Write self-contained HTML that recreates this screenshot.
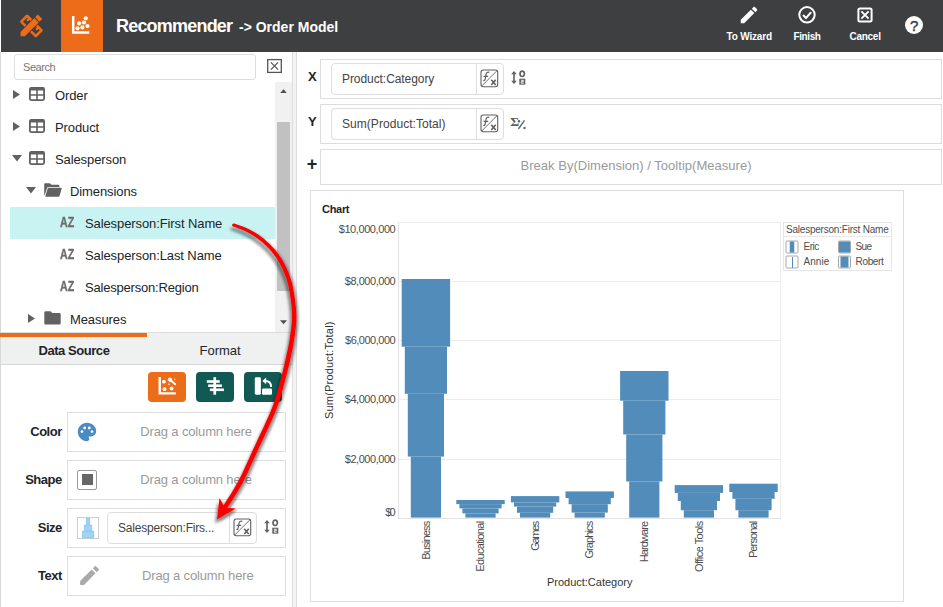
<!DOCTYPE html>
<html><head><meta charset="utf-8"><title>Recommender</title>
<style>
html,body{margin:0;padding:0;}
body{width:943px;height:607px;overflow:hidden;background:#fff;font-family:"Liberation Sans",sans-serif;color:#212529;position:relative;}
#app{position:absolute;left:0;top:0;width:943px;height:607px;overflow:hidden;background:#fff;}
.a{position:absolute;}
.t{position:absolute;white-space:nowrap;line-height:1;font-size:13px;}
.b{font-weight:bold;}
#hdr{left:1px;top:0;width:942px;height:52px;background:#3e3f41;}
#hl{left:61px;top:0;width:42px;height:52px;background:#ec6c1a;}
.hb{color:#fff;font-weight:bold;font-size:10px;}
.row{left:320px;width:622px;border:1px solid #ddd;box-sizing:border-box;background:#fff;}
.fld{border:1px solid #ddd;border-radius:4px;box-sizing:border-box;background:#fff;}
.box{border:1px solid #ddd;box-sizing:border-box;background:#fff;}
.ph{color:#9a9a9a;font-size:13px;letter-spacing:-0.15px;}
.lbl{font-weight:bold;font-size:13px;text-align:right;width:60px;letter-spacing:-0.45px;}
.tb{top:372px;width:38px;height:30px;border-radius:4px;background:#115a54;}
</style></head><body><div id="app">

<!-- header -->
<div class="a" id="hdr"></div>
<div class="a" id="hl"></div>
<span class="t b" style="left:116px;top:16.800px;font-size:18px;color:#fff;letter-spacing:-0.8px;">Recommender</span>
<span class="t b" style="left:239px;top:19.600px;font-size:14px;color:#fff;letter-spacing:0px;">-&gt; Order Model</span>
<span class="t hb" style="left:726.500px;top:31.500px;letter-spacing:-0.17px;">To Wizard</span>
<span class="t hb" style="left:793.500px;top:31.500px;letter-spacing:-0.4px;">Finish</span>
<span class="t hb" style="left:849.500px;top:31.500px;letter-spacing:-0.27px;">Cancel</span>


<!-- header icons -->
<svg class="a" style="left:10px;top:5px;" width="46" height="42" viewBox="10 5 46 42"><g transform="translate(31.200,25.600) rotate(45)"><rect x="-9.850" y="-4" width="20.500" height="8.200" rx="0.300" fill="none" stroke="#ec6c1a" stroke-width="2.600"/><path d="M-6.300 -4v3.600M6.300 -4v3.600" stroke="#ec6c1a" stroke-width="2.200" fill="none"/><rect x="-3.900" y="-8" width="7.800" height="16" fill="#3e3f41"/><path fill="#ec6c1a" d="M-3.100 -12.500h6.200v3.800h-6.200zM-3.100 -7.500h6.200v19.500l-3.100 3.100l-3.100-3.100z"/></g></svg>
<svg class="a" style="left:61px;top:0;" width="42" height="52" viewBox="61 0 42 52"><path d="M73.2 16v16.6h16.1" fill="none" stroke="#fff" stroke-width="2.5"/><g fill="#fff"><circle cx="85.8" cy="18.3" r="2.1"/><circle cx="79.1" cy="23.3" r="2.1"/><circle cx="84" cy="22.5" r="2.1"/><circle cx="87.5" cy="26" r="2.1"/><circle cx="77.5" cy="28.3" r="2.1"/><circle cx="82.4" cy="27.4" r="2.1"/></g></svg>
<svg class="a" style="left:738px;top:4.2px;" width="22" height="22" viewBox="0 0 24 24"><path fill="#fff" d="M3 17.25V21h3.750L17.810 9.940l-3.750-3.750L3 17.250zM20.710 7.040c.390-.390.390-1.020 0-1.410l-2.340-2.340c-.390-.390-1.020-.390-1.410 0l-1.830 1.830 3.750 3.750 1.830-1.830z"/></svg>
<svg class="a" style="left:796px;top:4px;" width="22" height="22" viewBox="796 4 22 22"><circle cx="807" cy="14.8" r="7.7" fill="none" stroke="#fff" stroke-width="2"/><path d="M803 15l3 3 5.200-5.800" fill="none" stroke="#fff" stroke-width="2"/></svg>
<svg class="a" style="left:855px;top:5px;" width="20" height="20" viewBox="855 5 20 20"><rect x="858.400" y="8.400" width="13.200" height="13.200" rx="1.500" fill="none" stroke="#fff" stroke-width="2"/><path d="M861.400 11.400l7.200 7.200M868.600 11.400l-7.200 7.200" stroke="#fff" stroke-width="2" fill="none"/></svg>
<div class="a" style="left:905px;top:16px;width:18px;height:18px;border-radius:9px;background:#fff;"></div>
<span class="t" style="left:909.900px;top:18.300px;font-size:15px;color:#3e3f41;-webkit-text-stroke:0.45px #3e3f41;">?</span>

<!-- left panel -->
<div class="a" style="left:0;top:52px;width:1px;height:555px;background:#d8d8d8;"></div>
<div class="a" style="left:292px;top:52px;width:5px;height:555px;background:#f3f3f3;border-left:1px solid #ddd;border-right:1px solid #ddd;box-sizing:border-box;"></div>
<div class="a fld" style="left:14px;top:54px;width:242px;height:26px;border-radius:3px;"></div>
<span class="t" style="left:23px;top:61.500px;font-size:11px;color:#777;letter-spacing:-0.45px;">Search</span>

<!-- tree -->
<div class="a" style="left:10px;top:207px;width:265px;height:32px;background:#c9f3f3;"></div>
<span class="t" style="left:55px;top:89px;letter-spacing:-0.1px;">Order</span>
<span class="t" style="left:55px;top:121px;letter-spacing:-0.1px;">Product</span>
<span class="t" style="left:55px;top:153px;letter-spacing:-0.1px;">Salesperson</span>
<span class="t" style="left:70px;top:185px;letter-spacing:-0.1px;">Dimensions</span>
<span class="t" style="left:85px;top:217px;letter-spacing:-0.1px;">Salesperson:First Name</span>
<span class="t" style="left:85px;top:249px;letter-spacing:-0.1px;">Salesperson:Last Name</span>
<span class="t" style="left:85px;top:281px;letter-spacing:-0.2px;">Salesperson:Region</span>
<span class="t" style="left:70px;top:313px;letter-spacing:-0.1px;">Measures</span>

<!-- tree icons -->
<svg class="a" style="left:13px;top:89.8px;" width="7" height="9" viewBox="0 0 7 9"><path d="M0 0l7 4.500-7 4.500z" fill="#616161"/></svg>
<svg class="a" style="left:29px;top:87px;" width="16" height="14" viewBox="0 0 16 14"><rect x="0.900" y="0.900" width="14.200" height="12.200" rx="1.500" fill="none" stroke="#616161" stroke-width="1.800"/><rect x="0.750" y="0.500" width="14.500" height="3" fill="#616161"/><path d="M8 3v10.500M0.750 8h14.500" stroke="#616161" stroke-width="1.600" fill="none"/></svg>
<svg class="a" style="left:13px;top:121.8px;" width="7" height="9" viewBox="0 0 7 9"><path d="M0 0l7 4.500-7 4.500z" fill="#616161"/></svg>
<svg class="a" style="left:29px;top:119px;" width="16" height="14" viewBox="0 0 16 14"><rect x="0.900" y="0.900" width="14.200" height="12.200" rx="1.500" fill="none" stroke="#616161" stroke-width="1.800"/><rect x="0.750" y="0.500" width="14.500" height="3" fill="#616161"/><path d="M8 3v10.500M0.750 8h14.500" stroke="#616161" stroke-width="1.600" fill="none"/></svg>
<svg class="a" style="left:11.6px;top:155.2px;" width="10" height="6.500" viewBox="0 0 10 6.500"><path d="M0 0h10l-5 6.500z" fill="#616161"/></svg>
<svg class="a" style="left:29px;top:151px;" width="16" height="14" viewBox="0 0 16 14"><rect x="0.900" y="0.900" width="14.200" height="12.200" rx="1.500" fill="none" stroke="#616161" stroke-width="1.800"/><rect x="0.750" y="0.500" width="14.500" height="3" fill="#616161"/><path d="M8 3v10.500M0.750 8h14.500" stroke="#616161" stroke-width="1.600" fill="none"/></svg>
<svg class="a" style="left:26.3px;top:187.2px;" width="10" height="6.500" viewBox="0 0 10 6.500"><path d="M0 0h10l-5 6.500z" fill="#616161"/></svg>
<svg class="a" style="left:43.500px;top:183px;" width="18" height="14" viewBox="0 0 18 14"><path d="M1.200 0.200h4.700l1.700 1.600h6.700a1 1 0 0 1 1 1v1.300h-10.900a1.300 1.300 0 0 0-1.300 0.900l-2.500 7.400a1 1 0 0 1-0.400-0.800v-10.400a1 1 0 0 1 1-1z" fill="#616161"/><path d="M4.400 4.700h12.700a0.600 0.600 0 0 1 0.600 0.800l-2.100 7.300a1.200 1.200 0 0 1-1.100 0.900h-12.600a0.500 0.500 0 0 1-0.500-0.700l2.400-7.700a0.900 0.900 0 0 1 0.600-0.600z" fill="#616161"/></svg>
<span class="t b" style="left:60.3px;top:215px;font-size:14px;color:#6b6b6b;-webkit-text-stroke:0.35px #6b6b6b;transform:scaleX(0.76);transform-origin:0 0;">AZ</span>
<span class="t b" style="left:60.3px;top:247px;font-size:14px;color:#6b6b6b;-webkit-text-stroke:0.35px #6b6b6b;transform:scaleX(0.76);transform-origin:0 0;">AZ</span>
<span class="t b" style="left:60.3px;top:279px;font-size:14px;color:#6b6b6b;-webkit-text-stroke:0.35px #6b6b6b;transform:scaleX(0.76);transform-origin:0 0;">AZ</span>
<svg class="a" style="left:28px;top:313.9px;" width="7" height="9" viewBox="0 0 7 9"><path d="M0 0l7 4.500-7 4.500z" fill="#616161"/></svg>
<svg class="a" style="left:43.5px;top:311px;" width="17" height="14" viewBox="0 0 17 14"><path d="M1.500 0.300h5l1.800 1.800h7.200a1.200 1.200 0 0 1 1.200 1.200v8.900a1.200 1.200 0 0 1-1.200 1.200h-14a1.200 1.200 0 0 1-1.200-1.200v-10.700a1.200 1.200 0 0 1 1.200-1.200z" fill="#616161"/></svg>
<svg class="a" style="left:266px;top:58px;" width="17" height="16" viewBox="266 58 17 16"><rect x="267.700" y="59.600" width="13.600" height="12.800" fill="#fff" stroke="#555" stroke-width="1.300"/><path d="M270.900 62.400l7.200 7.200M278.100 62.400l-7.200 7.200" stroke="#555" stroke-width="1.300" fill="none"/></svg>
<!-- scrollbar -->
<div class="a" style="left:275px;top:82px;width:17px;height:250px;background:#f1f1f1;"></div>
<div class="a" style="left:277px;top:122px;width:13px;height:169px;background:#c1c1c1;"></div>

<svg class="a" style="left:280px;top:88.700px;" width="7" height="4.500" viewBox="0 0 9 5"><path d="M0 5l4.500-5 4.500 5z" fill="#505050"/></svg>
<svg class="a" style="left:280px;top:320.300px;" width="7" height="4.500" viewBox="0 0 9 5"><path d="M0 0h9l-4.500 5z" fill="#505050"/></svg>

<!-- tabs -->
<div class="a" style="left:1px;top:332px;width:291px;height:33px;background:#eff0f0;border-top:1px solid #ddd;border-bottom:1px solid #d6d6d6;box-sizing:border-box;"></div>
<div class="a" style="left:0px;top:333px;width:147px;height:4px;background:#ec6c1a;"></div>
<span class="t b" style="left:38.500px;top:343.800px;letter-spacing:-0.45px;">Data Source</span>
<span class="t" style="left:199.500px;top:343.800px;">Format</span>

<!-- tool buttons -->
<div class="a tb" style="left:148px;background:#ec6c1a;"></div>
<div class="a tb" style="left:196px;"></div>
<div class="a tb" style="left:244px;"></div>

<!-- fields -->
<div class="a box" style="left:67px;top:412px;width:219px;height:40px;"></div>
<div class="a box" style="left:67px;top:460px;width:219px;height:40px;"></div>
<div class="a box" style="left:67px;top:508px;width:219px;height:40px;"></div>
<div class="a box" style="left:67px;top:556px;width:219px;height:40px;"></div>
<span class="t lbl" style="left:1.900px;top:424.500px;">Color</span>
<span class="t lbl" style="left:1.900px;top:472.500px;">Shape</span>
<span class="t lbl" style="left:1.900px;top:520.500px;">Size</span>
<span class="t lbl" style="left:1.900px;top:568.500px;">Text</span>
<span class="t ph" style="left:140.300px;top:425px;">Drag a column here</span>
<span class="t ph" style="left:140.300px;top:473px;">Drag a column here</span>
<span class="t ph" style="left:142px;top:569px;">Drag a column here</span>
<div class="a fld" style="left:107px;top:512px;width:150px;height:32px;"></div>
<div class="a" style="left:229px;top:513px;width:1px;height:30px;background:#ddd;"></div>
<span class="t" style="left:118px;top:521.500px;color:#444;font-size:12px;letter-spacing:-0.2px;">Salesperson:Firs...</span>

<!-- right: rows -->
<div class="a row" style="top:59px;height:40px;"></div>
<div class="a row" style="top:104px;height:40px;"></div>
<div class="a row" style="top:149px;height:36px;"></div>
<span class="t b" style="left:308px;top:70.300px;">X</span>
<span class="t b" style="left:308px;top:115.300px;">Y</span>
<span class="t b" style="left:306.800px;top:155px;font-size:18px;">+</span>
<div class="a fld" style="left:331px;top:63px;width:173px;height:32px;"></div>
<div class="a fld" style="left:331px;top:108px;width:173px;height:32px;"></div>
<div class="a" style="left:476px;top:64px;width:1px;height:30px;background:#ddd;"></div>
<div class="a" style="left:476px;top:109px;width:1px;height:30px;background:#ddd;"></div>
<span class="t" style="left:342px;top:72.500px;color:#444;font-size:12px;letter-spacing:-0.07px;">Product:Category</span>
<span class="t" style="left:342px;top:117.500px;color:#444;font-size:12px;letter-spacing:0.05px;">Sum(Product:Total)</span>
<span class="t ph" style="left:520.500px;top:159px;letter-spacing:0.02px;">Break By(Dimension) / Tooltip(Measure)</span>

<!-- icons -->
<svg class="a" style="left:480.200px;top:69.400px;" width="19" height="19" viewBox="0 0 19 19"><rect x="1" y="1" width="16.700" height="16.700" rx="2.200" fill="#fff" stroke="#616161" stroke-width="1.100"/><path d="M1.700 17L17 1.700" stroke="#616161" stroke-width="0.900" fill="none"/><path d="M9.300 3.400c-1.700-0.600-2.900 0.200-3.200 1.800l-1 5.200c-0.200 1-0.900 1.300-1.800 1M3.600 7.300h4.600" stroke="#616161" stroke-width="1.200" fill="none"/><path d="M11.300 10.800l4.400 5.200M15.700 10.800l-4.400 5.200" stroke="#616161" stroke-width="1.600" fill="none"/></svg>
<svg class="a" style="left:480.200px;top:114.400px;" width="19" height="19" viewBox="0 0 19 19"><rect x="1" y="1" width="16.700" height="16.700" rx="2.200" fill="#fff" stroke="#616161" stroke-width="1.100"/><path d="M1.700 17L17 1.700" stroke="#616161" stroke-width="0.900" fill="none"/><path d="M9.300 3.400c-1.700-0.600-2.900 0.200-3.200 1.800l-1 5.200c-0.200 1-0.900 1.300-1.800 1M3.600 7.300h4.600" stroke="#616161" stroke-width="1.200" fill="none"/><path d="M11.300 10.800l4.400 5.200M15.700 10.800l-4.400 5.200" stroke="#616161" stroke-width="1.600" fill="none"/></svg>
<svg class="a" style="left:233.300px;top:517.600px;" width="19" height="19" viewBox="0 0 19 19"><rect x="1" y="1" width="16.700" height="16.700" rx="2.200" fill="#fff" stroke="#616161" stroke-width="1.100"/><path d="M1.700 17L17 1.700" stroke="#616161" stroke-width="0.900" fill="none"/><path d="M9.300 3.400c-1.700-0.600-2.900 0.200-3.200 1.800l-1 5.200c-0.200 1-0.900 1.300-1.800 1M3.600 7.300h4.600" stroke="#616161" stroke-width="1.200" fill="none"/><path d="M11.300 10.800l4.400 5.200M15.700 10.800l-4.400 5.200" stroke="#616161" stroke-width="1.600" fill="none"/></svg>
<svg class="a" style="left:511px;top:70px;" width="16" height="16" viewBox="0 0 16 16"><path d="M3 1l2.800 3.300h-2v6.400h2l-2.800 3.300-2.800-3.300h2v-6.400h-2z" fill="#616161"/><ellipse cx="11.200" cy="3.800" rx="2.200" ry="2.700" fill="none" stroke="#616161" stroke-width="1.700"/><rect x="8.300" y="8.700" width="6" height="6" fill="#616161"/><path d="M10 10.300h2.300v1.400h-2v1.500h2.500" stroke="#fff" stroke-width="0.900" fill="none"/></svg>
<svg class="a" style="left:264px;top:519px;" width="16" height="16" viewBox="0 0 16 16"><path d="M3 1l2.800 3.300h-2v6.400h2l-2.800 3.300-2.800-3.300h2v-6.400h-2z" fill="#616161"/><ellipse cx="11.200" cy="3.800" rx="2.200" ry="2.700" fill="none" stroke="#616161" stroke-width="1.700"/><rect x="8.300" y="8.700" width="6" height="6" fill="#616161"/><path d="M10 10.300h2.300v1.400h-2v1.500h2.500" stroke="#fff" stroke-width="0.900" fill="none"/></svg>
<span class="t" style="left:510.300px;top:114.500px;font-size:13.500px;font-family:'Liberation Serif',serif;color:#616161;font-weight:bold;">Σ</span>
<svg class="a" style="left:517px;top:119px;" width="10" height="12" viewBox="0 0 10 12"><path d="M1.500 9.800l6-8.500" stroke="#616161" stroke-width="1.400" fill="none"/><circle cx="2" cy="2.200" r="1.200" fill="#616161"/><circle cx="7.500" cy="9" r="1.200" fill="#616161"/></svg>
<svg class="a" style="left:148px;top:372px;" width="38" height="30" viewBox="148 372 38 30"><path d="M159.750 377.100v16.300h16.250" fill="none" stroke="#fff" stroke-width="2.400"/><g fill="#fff"><circle cx="163.900" cy="381.700" r="1.900"/><circle cx="164.500" cy="389.200" r="1.900"/><circle cx="171.500" cy="388.500" r="1.900"/><path d="M170.00 376.80L170.65 378.35L172.27 377.89L171.46 379.37L172.83 380.35L171.17 380.64L171.26 382.31L170.00 381.20L168.74 382.31L168.83 380.64L167.17 380.35L168.54 379.37L167.73 377.89L169.35 378.35z"/><path d="M170.600 379l5.800 5.100-1.300 1.500-5.800-5.100z"/><path d="M174.90 378.00L175.22 378.88L176.10 379.20L175.22 379.52L174.90 380.40L174.58 379.52L173.70 379.20L174.58 378.88z"/><path d="M169.00 382.90L169.35 383.85L170.30 384.20L169.35 384.55L169.00 385.50L168.65 384.55L167.70 384.20L168.65 383.85z"/></g></svg>
<svg class="a" style="left:196px;top:372px;" width="38" height="30" viewBox="196 372 38 30"><g fill="#fff"><rect x="213.400" y="377.200" width="2.700" height="17.500"/><rect x="206.800" y="380.200" width="12.900" height="2.600"/><rect x="208.200" y="384.400" width="13.700" height="2.600"/><rect x="209.900" y="388.500" width="14" height="2.600"/></g></svg>
<svg class="a" style="left:244px;top:372px;" width="38" height="30" viewBox="244 372 38 30"><rect x="254.800" y="377.200" width="6.100" height="17.500" rx="1.400" fill="#fff"/><rect x="262" y="388.600" width="10" height="6.100" rx="1.200" fill="#fff"/><path d="M265.300 380.900c3.700 0 5.800 2.300 5.800 6" fill="none" stroke="#fff" stroke-width="2"/><path d="M262.300 380.900l3.900-3.300v6.600z" fill="#fff"/></svg>
<svg class="a" style="left:76.300px;top:420.500px;" width="22" height="22" viewBox="0 0 24 24"><path fill="#4a8bc2" d="M12 2C6.490 2 2 6.490 2 12s4.490 10 10 10c1.380 0 2.500-1.120 2.500-2.500 0-.610-.230-1.200-.640-1.670-.080-.100-.130-.210-.130-.330 0-.280.220-.500.500-.500H16c3.310 0 6-2.690 6-6 0-4.960-4.490-9-10-9zm-5.500 11c-.830 0-1.500-.670-1.500-1.500S5.670 10 6.500 10s1.500.670 1.500 1.500S7.330 13 6.500 13zm3-4C8.670 9 8 8.330 8 7.500S8.670 6 9.500 6s1.500.670 1.500 1.500S10.330 9 9.500 9zm5 0c-.830 0-1.500-.670-1.500-1.500S13.670 6 14.500 6s1.500.670 1.500 1.500S15.330 9 14.500 9zm3 4c-.830 0-1.500-.670-1.500-1.500s.670-1.500 1.500-1.500 1.500.670 1.500 1.500-.670 1.500-1.500 1.500z"/></svg>
<div class="a" style="left:77px;top:469.500px;width:20px;height:20px;box-sizing:border-box;border:1px solid #999;border-radius:2px;background:#fff;"></div><div class="a" style="left:82px;top:474px;width:11px;height:11px;background:#666;"></div>
<svg class="a" style="left:77px;top:517px;" width="23" height="23" viewBox="77 517 23 23"><rect x="77.500" y="517.500" width="21" height="21" fill="#fff" stroke="#cfcfcf"/><g fill="#9fd4f5" stroke="#86c2ea" stroke-width="0.700"><rect x="86.300" y="518.300" width="3.500" height="7"/><rect x="84.300" y="525.200" width="7.500" height="6"/><rect x="82.300" y="531.200" width="11.500" height="6.700"/></g></svg>
<svg class="a" style="left:76.500px;top:563px;" width="25" height="25" viewBox="0 0 24 24"><path fill="#aaa" d="M3 17.250V21h3.750L17.810 9.940l-3.750-3.750L3 17.250zM20.710 7.040c.39-.39.39-1.020 0-1.410l-2.340-2.340c-.39-.39-1.020-.39-1.410 0l-1.830 1.830 3.750 3.750 1.830-1.830z"/></svg>
<!-- chart -->
<div class="a box" style="left:310px;top:190px;width:594px;height:412px;"></div>
<span class="t b" style="left:322px;top:203.700px;font-size:11px;letter-spacing:-0.3px;">Chart</span>

<svg class="a" style="left:310px;top:190px;" width="594" height="412" viewBox="310 190 594 412" font-family="'Liberation Sans',sans-serif">
<g stroke="#ececec" stroke-width="1" fill="none" shape-rendering="crispEdges">
<path d="M398 222.5H781"/>
<path d="M398 281.5H781"/>
<path d="M398 340.5H781"/>
<path d="M398 399.5H781"/>
<path d="M398 459.5H781"/>
<path d="M780.500 222V518"/>
</g>
<path d="M398.500 222V518.500M398 518.500H781" stroke="#e2e2e2" stroke-width="1" fill="none" shape-rendering="crispEdges"/>
<g fill="#518cba">
<rect x="401.7" y="279.0" width="48.4" height="67.7"/>
<rect x="404.8" y="346.7" width="42.2" height="47.1"/>
<rect x="407.8" y="393.8" width="36.2" height="62.8"/>
<rect x="410.8" y="456.6" width="30.2" height="61.0"/>
<rect x="456.3" y="500.0" width="48.4" height="4.1"/>
<rect x="459.4" y="504.1" width="42.2" height="4.3"/>
<rect x="462.4" y="508.4" width="36.2" height="5.0"/>
<rect x="465.4" y="513.4" width="30.2" height="4.2"/>
<rect x="510.9" y="496.1" width="48.4" height="6.3"/>
<rect x="514.0" y="502.4" width="42.2" height="4.2"/>
<rect x="517.0" y="506.6" width="36.2" height="6.2"/>
<rect x="520.0" y="512.8" width="30.2" height="4.8"/>
<rect x="565.5" y="491.4" width="48.4" height="6.6"/>
<rect x="568.6" y="498.0" width="42.2" height="6.2"/>
<rect x="571.6" y="504.2" width="36.2" height="8.4"/>
<rect x="574.6" y="512.6" width="30.2" height="5.0"/>
<rect x="620.1" y="371.0" width="48.4" height="29.7"/>
<rect x="623.2" y="400.7" width="42.2" height="33.8"/>
<rect x="626.2" y="434.5" width="36.2" height="47.0"/>
<rect x="629.2" y="481.5" width="30.2" height="36.1"/>
<rect x="674.7" y="485.1" width="48.4" height="7.8"/>
<rect x="677.8" y="492.9" width="42.2" height="8.1"/>
<rect x="680.8" y="501.0" width="36.2" height="9.2"/>
<rect x="683.8" y="510.2" width="30.2" height="7.4"/>
<rect x="729.3" y="483.7" width="48.4" height="8.3"/>
<rect x="732.4" y="492.0" width="42.2" height="6.8"/>
<rect x="735.4" y="498.8" width="36.2" height="11.4"/>
<rect x="738.4" y="510.2" width="30.2" height="7.4"/>
</g>
<g font-size="11" fill="#4d4d4d" text-anchor="end">
<text x="395.700" y="232.5" textLength="57">$10,000,000</text>
<text x="395.700" y="285.2" textLength="50.9">$8,000,000</text>
<text x="395.700" y="344.1" textLength="50.7">$6,000,000</text>
<text x="395.700" y="403.2" textLength="50.9">$4,000,000</text>
<text x="395.700" y="462.8" textLength="50.9">$2,000,000</text>
<text x="395.700" y="516" textLength="10.4">$0</text>
</g>
<g font-size="11" fill="#4d4d4d" text-anchor="end">
<text transform="translate(429.6,520.800) rotate(-90)" textLength="39">Business</text>
<text transform="translate(484.2,520.800) rotate(-90)" textLength="50.9">Educational</text>
<text transform="translate(538.8,520.800) rotate(-90)" textLength="29.9">Games</text>
<text transform="translate(593.4,520.800) rotate(-90)" textLength="37.8">Graphics</text>
<text transform="translate(648.0,520.800) rotate(-90)" textLength="41.4">Hardware</text>
<text transform="translate(702.6,520.800) rotate(-90)" textLength="51.2">Office Tools</text>
<text transform="translate(757.2,520.800) rotate(-90)" textLength="37.3">Personal</text>
</g>
<text x="547" y="586" font-size="11" fill="#333" textLength="85.400">Product:Category</text>
<text transform="translate(332.800,370.300) rotate(-90)" text-anchor="middle" font-size="11" fill="#333" textLength="97.600">Sum(Product:Total)</text>
<rect x="783.500" y="222.500" width="108" height="48" fill="#fff" stroke="#e6e6e6" shape-rendering="crispEdges"/>
<path d="M783.500 236.500H891.500" stroke="#e6e6e6" shape-rendering="crispEdges"/>
<text x="786" y="233" font-size="10" fill="#4d4d4d" textLength="102.700">Salesperson:First Name</text>
<rect x="786" y="241" width="12" height="12" rx="1" fill="#fff" stroke="#a8a8a8"/><rect x="789.75" y="241.5" width="4.5" height="11" fill="#518cba"/>
<rect x="786" y="256" width="12" height="12" rx="1" fill="#fff" stroke="#a8a8a8"/><rect x="792" y="256.500" width="1" height="11" fill="#518cba" shape-rendering="crispEdges"/>
<rect x="838.5" y="241" width="12" height="12" rx="1" fill="#fff" stroke="#a8a8a8"/><rect x="839.00" y="241.5" width="11" height="11" fill="#518cba"/>
<rect x="838.5" y="256" width="12" height="12" rx="1" fill="#fff" stroke="#a8a8a8"/><rect x="840.50" y="256.5" width="8" height="11" fill="#518cba"/>
<g font-size="10" fill="#4d4d4d">
<text x="803.500" y="249.800" textLength="15.800">Eric</text><text x="803.500" y="264.900" textLength="25.700">Annie</text><text x="855.500" y="249.800" textLength="16.500">Sue</text><text x="855.500" y="264.900" textLength="28.400">Robert</text>
</g>
</svg>

<!-- arrow -->
<svg class="a" style="left:200px;top:210px;pointer-events:none;" width="110" height="325" viewBox="200 210 110 325"><defs><filter id="ash" x="-20%" y="-5%" width="140%" height="110%"><feGaussianBlur in="SourceAlpha" stdDeviation="1.500" result="b"/><feOffset in="b" dx="-2" dy="3.500" result="o1"/><feOffset in="b" dx="2" dy="2" result="o2"/><feMerge result="m"><feMergeNode in="o1"/><feMergeNode in="o2"/></feMerge><feComponentTransfer in="m" result="sh"><feFuncA type="linear" slope="0.450"/></feComponentTransfer><feMerge><feMergeNode in="sh"/><feMergeNode in="SourceGraphic"/></feMerge></filter></defs><g filter="url(#ash)"><path d="M233.1 226.2L235.9 227.3L238.7 228.4L241.5 229.5L244.4 230.8L247.4 232.3L250.5 234.0L253.5 235.8L256.5 237.8L259.3 239.9L262.0 242.1L264.6 244.4L267.0 246.8L269.4 249.3L271.6 251.8L273.8 254.4L275.7 257.1L277.6 259.9L279.3 262.8L280.9 265.7L282.4 268.8L283.8 271.9L285.0 275.0L286.2 278.1L287.1 280.9L287.8 283.6L288.4 286.1L288.9 288.5L289.3 290.9L289.7 293.2L290.1 295.6L290.5 298.1L290.9 300.7L291.2 303.4L291.5 306.2L291.7 309.0L291.8 311.6L291.9 314.1L292.0 316.5L292.0 318.7L291.9 320.9L291.7 323.1L291.5 325.3L291.3 327.7L291.0 330.3L290.6 333.1L290.1 336.1L289.7 339.3L289.1 342.4L288.5 345.8L287.8 349.3L286.9 353.3L285.9 358.0L284.7 363.3L283.3 369.1L281.8 375.0L280.4 380.7L278.9 385.9L277.6 390.6L276.5 394.6L275.4 398.1L274.5 401.0L273.6 403.8L272.6 406.5L271.4 409.4L270.0 412.9L268.2 416.9L266.1 421.6L263.7 426.9L261.0 432.6L258.2 438.5L255.6 444.3L253.1 449.5L251.1 454.0L249.4 457.8L247.9 461.0L246.6 463.9L245.4 466.5L244.3 469.0L243.1 471.5L242.0 473.9L240.7 476.4L239.5 478.8L238.2 481.2L236.9 483.6L235.5 486.1L234.1 488.5L232.6 491.1L231.0 493.7L229.2 496.5L227.4 499.3L225.5 502.3L223.6 505.2L219.4 498.1L217.1 519.4L235.8 508.4L227.4 507.8L229.4 504.8L231.3 501.8L233.1 498.9L234.9 496.1L236.5 493.5L238.1 490.9L239.5 488.4L240.9 485.9L242.3 483.4L243.6 480.9L244.9 478.4L246.1 475.9L247.3 473.5L248.5 471.0L249.6 468.4L250.8 465.8L252.1 462.9L253.5 459.7L255.3 455.9L257.3 451.4L259.7 446.2L262.4 440.5L265.2 434.6L267.9 428.8L270.3 423.5L272.4 418.8L274.2 414.7L275.7 411.2L276.9 408.1L277.9 405.3L278.9 402.4L279.8 399.4L280.9 395.9L282.1 391.8L283.4 387.1L284.8 381.8L286.3 376.1L287.8 370.1L289.2 364.3L290.4 359.0L291.4 354.3L292.3 350.2L293.0 346.6L293.6 343.2L294.1 340.0L294.6 336.8L295.0 333.8L295.4 330.9L295.7 328.2L295.9 325.7L296.1 323.4L296.3 321.1L296.3 318.8L296.3 316.4L296.3 314.0L296.2 311.4L296.0 308.6L295.7 305.8L295.4 302.9L295.1 300.2L294.7 297.5L294.3 294.9L293.9 292.5L293.4 290.1L293.0 287.7L292.5 285.2L291.8 282.6L291.0 279.7L290.0 276.7L288.8 273.5L287.5 270.3L286.0 267.1L284.4 263.9L282.7 260.8L280.9 257.8L278.9 254.9L276.8 252.0L274.6 249.3L272.2 246.7L269.7 244.1L267.1 241.7L264.4 239.3L261.5 237.0L258.5 234.8L255.4 232.8L252.2 230.9L249.0 229.3L245.8 227.8L242.8 226.5L239.8 225.4L236.9 224.4L234.1 223.6Z" fill="#fc0006"/><circle cx="233.600" cy="225" r="1.500" fill="#fc0006"/></g></svg>
</div></body></html>
